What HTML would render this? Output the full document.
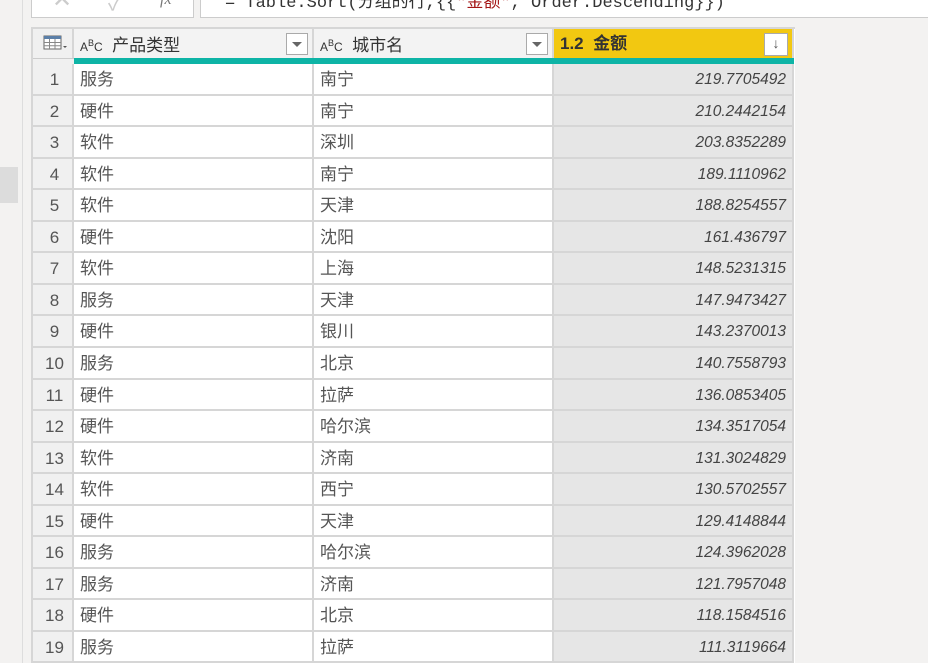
<!DOCTYPE html>
<html><head><meta charset="utf-8"><style>
body{margin:0;width:928px;height:663px;overflow:hidden;background:#fff;font-family:"Liberation Sans","Noto Sans CJK SC",sans-serif;position:relative}
.a{position:absolute;box-sizing:border-box}
.c{position:absolute;box-sizing:border-box;border-right:2px solid #d6d6d6;border-bottom:2px solid #d6d6d6;font-size:17px;color:#555;padding-left:6px;line-height:31px;white-space:nowrap;overflow:hidden}
.n{background:#f0f0f0;text-align:center;padding:0 0 0 4px;color:#555}
.v{background:#e6e6e6;text-align:right;font-style:italic;padding-right:6px;font-size:15.5px;color:#444}
</style></head><body>
<div class="a" style="left:0;top:0;width:23px;height:663px;background:#f3f2f1;border-right:1px solid #ddd"></div>
<div class="a" style="left:0;top:167px;width:18px;height:36px;background:#dcdcdc"></div>
<div class="a" style="left:23px;top:0;width:905px;height:663px;background:#f3f2f1"></div>
<div class="a" style="left:31px;top:-2px;width:163px;height:20px;background:#fff;border:1px solid #ccc;overflow:hidden"><span style="position:absolute;left:20px;top:-14px;color:#ccc;font-size:24px">✕</span><span style="position:absolute;left:76px;top:-14px;color:#ccc;font-size:22px">✓</span><span style="position:absolute;left:128px;top:-8px;color:#777;font-style:italic;font-family:'Liberation Serif',serif;font-size:16px">fx</span></div>
<div class="a" style="left:200px;top:-2px;width:740px;height:20px;background:#fff;border:1px solid #ccc;overflow:hidden"><span style="position:absolute;left:24px;top:-12px;font-family:'Liberation Mono','Noto Sans CJK SC',monospace;font-size:17px;color:#333">= Table.Sort(分组的行,{{<span style="color:#a31515">"金额"</span>, Order.Descending}})</span></div>
<div class="a" style="left:31px;top:27px;width:764px;height:636px;background:#fff;border-left:2px solid #d6d6d6;border-top:2px solid #d6d6d6"></div>
<div id="t"></div>
<script>
var h='';
h+='<div class="c n" style="left:33px;top:29px;width:41px;height:29px;border-bottom:none"><svg width="26" height="18" viewBox="0 0 26 18" style="margin-top:5px"><rect x="2" y="2" width="17" height="13" fill="#fff" stroke="#666"/><rect x="2" y="2" width="17" height="3" fill="#5b7fa8"/><path d="M2 8.5h17M2 11.8h17M7.5 5v10M13 5v10" stroke="#888"/><path d="M21 12l2 2 2-2z" fill="#555"/></svg></div>';
var hd=[[74,'产品类型'],[314,'城市名']];
hd.forEach(function(x){h+='<div class="c" style="left:'+x[0]+'px;top:29px;width:240px;height:29px;line-height:29px;background:#f3f3f3;color:#333;border-bottom:none;font-size:17px"><span style="font-size:12px">A<sup style="font-size:9px">B</sup>C</span>&nbsp; '+x[1]+'<div style="position:absolute;right:4px;top:4px;width:20px;height:20px;border:1px solid #aaa;background:#fff"><div style="position:absolute;left:5px;top:8px;border-left:5px solid transparent;border-right:5px solid transparent;border-top:5px solid #666"></div></div></div>';});
h+='<div class="c" style="left:554px;top:29px;width:240px;height:29px;line-height:29px;background:#f2c811;color:#333;border-bottom:none;font-size:17px;font-weight:bold">1.2&nbsp; 金额<div style="position:absolute;right:4px;top:4px;width:22px;height:21px;border:1px solid #aaa;background:#fff;font-size:14px;line-height:18px;text-align:center;font-weight:normal;color:#555">↓</div></div>';
h+='<div class="a" style="left:74px;top:58px;width:720px;height:6px;background:#0eb4a6"></div>';
h+='<div class="a" style="left:33px;top:58px;width:41px;height:6px;background:#f0f0f0;border-top:1px solid #ccc"></div>';
var d=[["服务","南宁","219.7705492"],["硬件","南宁","210.2442154"],["软件","深圳","203.8352289"],["软件","南宁","189.1110962"],["软件","天津","188.8254557"],["硬件","沈阳","161.436797"],["软件","上海","148.5231315"],["服务","天津","147.9473427"],["硬件","银川","143.2370013"],["服务","北京","140.7558793"],["硬件","拉萨","136.0853405"],["硬件","哈尔滨","134.3517054"],["软件","济南","131.3024829"],["软件","西宁","130.5702557"],["硬件","天津","129.4148844"],["服务","哈尔滨","124.3962028"],["服务","济南","121.7957048"],["硬件","北京","118.1584516"],["服务","拉萨","111.3119664"]];
d.forEach(function(r,i){var t=Math.round(64+i*31.55),b=Math.round(64+(i+1)*31.55),hh=b-t;
h+='<div class="c n" style="left:33px;top:'+t+'px;width:41px;height:'+hh+'px">'+(i+1)+'</div>';
h+='<div class="c" style="left:74px;top:'+t+'px;width:240px;height:'+hh+'px">'+r[0]+'</div>';
h+='<div class="c" style="left:314px;top:'+t+'px;width:240px;height:'+hh+'px">'+r[1]+'</div>';
h+='<div class="c v" style="left:554px;top:'+t+'px;width:240px;height:'+hh+'px">'+r[2]+'</div>';});
document.getElementById('t').innerHTML=h;
</script>
</body></html>
